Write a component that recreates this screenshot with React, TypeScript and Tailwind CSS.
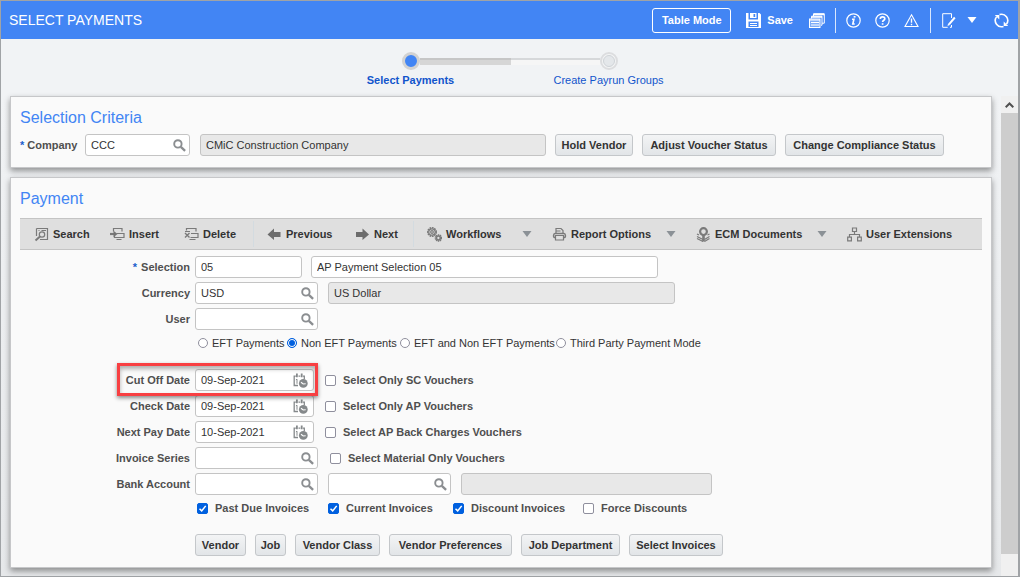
import { useState } from 'react'
import type { ReactNode } from 'react'

function Caret({ className }: { className?: string }) {
  return (
    <svg viewBox="0 0 10 6" className={`h-[6px] w-[10px] shrink-0 ${className ?? ''}`} fill="currentColor" aria-hidden="true">
      <path d="M0.5 0h9L5 6z" />
    </svg>
  )
}

function Magnifier() {
  return (
    <svg viewBox="0 0 13 13" className="h-[13px] w-[13px]" fill="none" stroke="#8b8e91" aria-hidden="true">
      <circle cx="4.9" cy="4.9" r="3.7" strokeWidth="1.9" />
      <path d="M7.8 7.8l4.3 4.1" strokeWidth="2.3" />
    </svg>
  )
}

function CalendarClock() {
  return (
    <svg viewBox="0 0 15 15" className="mr-[2px] h-[15px] w-[15px]" fill="none" stroke="#85898b" aria-hidden="true">
      <path d="M5 12.5H1.2V3.2h1.6M5.5 3.2h1.8M10 3.2h1.3v3" strokeWidth="1.3" />
      <path d="M3.9 0.5v3.7M8.7 0.5v3.7" strokeWidth="1.8" />
      <path d="M2.9 6.8l1.1-.6v4.6" strokeWidth="1" />
      <circle cx="10.3" cy="10.4" r="4.4" fill="#85898b" stroke="none" />
      <path d="M8 9.2l2.2 1.800 2.500-.2" stroke="#fff" strokeWidth="1.100" />
    </svg>
  )
}

const toolIcons: Record<string, ReactNode> = {
  search: (
    <>
      <path d="M2.500 1.500h11v11H6M2.500 1.500v7.500" />
      <path d="M4.500 3.500h1M7.500 3.500h4.500" />
      <circle cx="8" cy="7.500" r="2.700" />
      <path d="M6 9.500l-4.500 4" strokeWidth="2" />
    </>
  ),
  insert: (
    <>
      <path d="M3.500 4.500v-3h8.500v3M6.500 6.500h7.500v4H4.500V9M6.500 12.500h5" />
      <path d="M0 7h5" strokeWidth="2.200" />
      <path d="M3.500 3.800l4 3.200-4 3.200z" fill="#747474" stroke="none" />
    </>
  ),
  delete: (
    <>
      <path d="M2.500 3.500v-2H12v3M7 6.500h7v4H6.500M5.500 12.500h6M1 4.500h5" />
      <path d="M1 6l4.500 4.500M5.500 6L1 10.500" strokeWidth="1.400" />
    </>
  ),
  previous: <path d="M7 1.500L.5 7.500 7 13v-3h6.500V5H7z" fill="#6c6c6c" stroke="none" />,
  next: <path d="M7.500 1.500l6.500 6-6.500 5.500v-3H1V5h6.500z" fill="#6c6c6c" stroke="none" />,
  workflows: (
    <>
      <circle cx="5" cy="5" r="4.200" strokeWidth="1.600" strokeDasharray="1.700 .7" />
      <circle cx="5" cy="5" r="3.200" />
      <circle cx="5" cy="5" r="1.300" />
      <circle cx="11.400" cy="11" r="3" strokeWidth="1.600" strokeDasharray="1.300 .6" />
      <circle cx="11.400" cy="11" r="1.900" strokeWidth="1.500" />
    </>
  ),
  report: (
    <>
      <path d="M4 6V1.500h5l2 2V6M4.500 4h4" />
      <path d="M3.500 10.500h-1c-1.300 0-1.300-4 .5-4h9c1.800 0 1.800 4 .5 4h-1" strokeWidth="1.500" />
      <path d="M3.500 8.500h8v4.500h-8z" fill="#dfdfdf" />
    </>
  ),
  ecm: (
    <>
      <path d="M1 7l2 1M1 9.500l6 3M1 11.500l6 3M13.500 7l-2 1M13.500 9.500l-5 3M13.500 11.500l-5 3" />
      <circle cx="7.500" cy="4.600" r="3.400" strokeWidth="2.200" />
      <path d="M7.500 8v6.500" strokeWidth="2.600" />
    </>
  ),
  extensions: (
    <>
      <path d="M5.500 1h4v3.500h-4zM7.500 4.500v3M2.500 10V7.500h10V10" />
      <path d="M.7 10.200h3.700v3.600H.7zM10.600 10.200h3.700v3.600h-3.700z" />
    </>
  ),
}

const tools = [
  { icon: 'search', label: 'Search', size: 'w-[76px]' },
  { icon: 'insert', label: 'Insert', size: 'w-[74px]' },
  { icon: 'delete', label: 'Delete', size: 'w-[69px]' },
  { icon: 'previous', label: 'Previous', size: 'w-[88px]', divided: true },
  { icon: 'next', label: 'Next', size: 'w-[58px]' },
  { icon: 'workflows', label: 'Workflows', size: 'w-[125px]', divided: true, menu: true },
  { icon: 'report', label: 'Report Options', size: 'w-[144px]', menu: true },
  { icon: 'ecm', label: 'ECM Documents', size: 'w-[151px]', menu: true },
  { icon: 'extensions', label: 'User Extensions', size: 'w-[112px]' },
]

const modes = [
  { label: 'EFT Payments', size: 'w-[89px]' },
  { label: 'Non EFT Payments', size: 'w-[113px]' },
  { label: 'EFT and Non EFT Payments', size: 'w-[156px]' },
  { label: 'Third Party Payment Mode', size: 'w-[146px]' },
]

const invoiceFlags = [
  { label: 'Past Due Invoices', size: 'w-[131px]', checked: true },
  { label: 'Current Invoices', size: 'w-[125px]', checked: true },
  { label: 'Discount Invoices', size: 'w-[130px]', checked: true },
  { label: 'Force Discounts', size: 'w-[110px]', checked: false },
]

const actions = [
  { label: 'Vendor', size: 'w-[51px]' },
  { label: 'Job', size: 'w-[31px]' },
  { label: 'Vendor Class', size: 'w-[85px]' },
  { label: 'Vendor Preferences', size: 'w-[123px]' },
  { label: 'Job Department', size: 'w-[99px]' },
  { label: 'Select Invoices', size: 'w-[94px]' },
]

function ToolButton({ icon, label, size, divided, menu }: (typeof tools)[number]) {
  return (
    <>
      {divided && <span className="mr-[13px] h-[26px] w-px bg-[#d3dbe0]" />}
      <button type="button" className={`flex shrink-0 items-center gap-1 text-left ${size}`}>
        <svg viewBox="0 0 15 15" className="h-[15px] w-[15px] shrink-0" fill="none" stroke="#7a7a7a" strokeWidth="1.200" aria-hidden="true">
          {toolIcons[icon]}
        </svg>
        <span className="whitespace-nowrap">{label}</span>
        {menu && <Caret className="mr-5 ml-auto text-[#8b9196]" />}
      </button>
    </>
  )
}

function GreyButton({ label, size }: { label: string; size: string }) {
  return (
    <button
      type="button"
      className={`h-[22px] rounded-[3px] border border-[#c4c7ca] bg-linear-to-b from-[#f3f4f5] to-[#e2e5e8] text-center font-bold whitespace-nowrap text-[#333] ${size}`}
    >
      {label}
    </button>
  )
}

type FieldProps = { id: string; value?: string; size: string; icon?: ReactNode; readOnly?: boolean; label?: string }

function Field({ id, value = '', size, icon, readOnly, label }: FieldProps) {
  return (
    <div className={`relative shrink-0 ${size}`}>
      <input
        id={id}
        type="text"
        aria-label={label}
        defaultValue={value}
        readOnly={readOnly}
        className={`block h-[22px] w-full rounded-[3px] border border-[#c4c4c4] px-[5px] text-[11px] text-[#333] outline-none ${readOnly ? 'bg-[#e8e8e8]' : 'bg-white'}`}
      />
      {icon && (
        <button type="button" aria-label="Choose a value" className="absolute inset-y-0 right-1 flex items-center">
          {icon}
        </button>
      )}
    </div>
  )
}

function Check({ label, size, checked }: { label: string; size?: string; checked?: boolean }) {
  return (
    <label className={`flex shrink-0 items-center gap-[7px] font-bold whitespace-nowrap text-[#4f4f4f] ${size ?? ''}`}>
      <span className="relative block h-[11px] w-[11px]">
        <input
          type="checkbox"
          defaultChecked={checked}
          className="peer block h-[11px] w-[11px] appearance-none rounded-[2px] border border-[#8f8f9d] bg-white checked:border-[#0060df] checked:bg-[#0060df]"
        />
        <svg viewBox="0 0 11 11" className="pointer-events-none absolute inset-0 hidden peer-checked:block" fill="none" stroke="#fff" strokeWidth="1.500">
          <path d="M2.500 5.700l2.200 2.200 4-5" />
        </svg>
      </span>
      {label}
    </label>
  )
}

type RowProps = { id: string; label: string; required?: boolean; highlighted?: boolean; children: ReactNode }

function Row({ id, label, required, highlighted, children }: RowProps) {
  return (
    <div className="relative flex items-center">
      <label htmlFor={id} className="mr-[5px] w-[170px] shrink-0 text-right font-bold text-[#4f4f4f]">
        {required && <span className="mr-1 text-[#1a5fcc]">*</span>}
        {label}
      </label>
      {children}
      {highlighted && (
        <div className="pointer-events-none absolute -top-[6px] -bottom-[5px] left-[97px] z-10 w-[201px] border-3 border-[#f83f42] shadow-[0_2px_4px_rgba(0,0,0,0.45),inset_0_3px_4px_rgba(0,0,0,0.3)]" />
      )}
    </div>
  )
}

function Panel({ title, children }: { title: string; children: ReactNode }) {
  return (
    <section className="border border-[#c6c7c9] bg-[#fafafa] px-[9px] pt-[9px] pb-[11px] shadow-[0_3px_6px_rgba(0,0,0,0.4)]">
      <h2 className="text-[16px] leading-6 text-[#4285f4]">{title}</h2>
      {children}
    </section>
  )
}

function TopBar() {
  return (
    <header className="flex h-[38px] items-center bg-[#4285f4] pr-[9px] pl-2 text-white">
      <h1 className="mr-auto text-[14px] leading-4">SELECT PAYMENTS</h1>
      <button type="button" className="h-[25px] w-[79px] rounded-[3px] border border-white font-bold">
        Table Mode
      </button>
      <button type="button" className="ml-[15px] flex items-center gap-[6px] font-bold">
        <svg viewBox="0 0 15 15" className="h-[15px] w-[15px]" fill="#fff" aria-hidden="true">
          <path d="M0 0h2.500v6.500H12V0h1.500L15 1.500V15H0z" />
          <path d="M4 0h6.500v5H4z" />
          <path d="M7.500 1h1.700v3H7.500zM2.500 8.500h10V14h-10z" fill="#4285f4" />
          <path d="M4 10h7v1H4zM4 12h7v1H4z" />
        </svg>
        Save
      </button>
      <button type="button" aria-label="Reports" className="ml-4">
        <svg viewBox="0 0 16 15" className="h-[15px] w-4" fill="none" stroke="#fff" aria-hidden="true">
          <path d="M4.500 3V.7h10.800v9.500H13" />
          <path d="M5 1.500h10" strokeWidth="1.600" />
          <path d="M2.500 5.500V3.200h10.500v9H12" />
          <path d="M3 4h10" strokeWidth="1.600" />
          <rect x=".5" y="6" width="10.500" height="8.500" fill="#7eacf8" />
          <path d="M1 7h10M2 9.500h8M2 12h8" />
        </svg>
      </button>
      <span className="mx-[10px] h-[25px] w-px bg-white/80" />
      <button type="button" aria-label="Information">
        <svg viewBox="0 0 15 15" className="h-[15px] w-[15px]" fill="none" stroke="#fff" aria-hidden="true">
          <circle cx="7.500" cy="7.500" r="6.700" strokeWidth="1.200" />
          <path d="M8.600 3v1.600" strokeWidth="1.900" />
          <path d="M6 6.300h1.900L6.800 11h1.900" strokeWidth="1.600" />
        </svg>
      </button>
      <button type="button" aria-label="Help" className="ml-[14px]">
        <svg viewBox="0 0 15 15" className="h-[15px] w-[15px]" fill="none" stroke="#fff" aria-hidden="true">
          <circle cx="7.500" cy="7.500" r="6.700" strokeWidth="1.200" />
          <path d="M5.300 6c0-3 4.500-2.800 4.500-.3 0 1.600-2.200 1.500-2.200 3.300M7.600 10.200v1.600" strokeWidth="1.700" />
        </svg>
      </button>
      <button type="button" aria-label="Warnings" className="ml-[14px]">
        <svg viewBox="0 0 15 15" className="h-[15px] w-[15px]" fill="none" stroke="#fff" aria-hidden="true">
          <path d="M7.500 1.800l6.500 11.700H1z" strokeWidth="1.100" />
          <path d="M7.500 5.500v4.300M7.500 10.800v1.500" strokeWidth="1.400" />
        </svg>
      </button>
      <span className="mx-[11px] h-[25px] w-px bg-white/80" />
      <button type="button" aria-label="Edit" className="flex items-center gap-[11px]">
        <svg viewBox="0 0 14 15" className="h-[15px] w-[14px]" fill="none" stroke="#fff" aria-hidden="true">
          <path d="M9.500 5V.7H.7v13.600h5M9.500 12v2.300H8" />
          <path d="M12.800 4.500L7 11.300" strokeWidth="2" />
          <path d="M5.500 13l.6-2.500 1.700 1.500z" fill="#fff" stroke="none" />
        </svg>
        <Caret className="text-white" />
      </button>
      <button type="button" aria-label="Refresh" className="ml-[17px]">
        <svg viewBox="0 0 15 15" className="h-[15px] w-[15px]" fill="none" stroke="#fff" strokeWidth="1.600" aria-hidden="true">
          <path d="M5.500 1.600a6.200 6.200 0 0 1 7 9.500M9.500 13.400A6.200 6.200 0 0 1 2.500 3.900" />
          <path d="M.8 2h4.500v4.500zM14.200 13H9.700V8.500z" fill="#fff" stroke="none" />
        </svg>
      </button>
    </header>
  )
}

function Steps() {
  return (
    <nav aria-label="Progress" className="flex h-[57px] flex-col items-center pt-[13px] text-[#1155cc]">
      <div className="flex items-center">
        <span className="h-[18px] w-[18px] rounded-full border-3 border-[#d2d2d2] bg-[#4285f4]" />
        <span className="h-[7px] w-[91px] border-t-2 border-[#c6c6c6] bg-[#d6d6d6]" />
        <span className="h-[7px] w-[89px] border-t-2 border-[#d6d8da] bg-[#f6f6f6]" />
        <span className="flex h-[18px] w-[18px] items-center justify-center rounded-full border-2 border-[#dcdddf] bg-[#f3f4f5]">
          <span className="h-3 w-3 rounded-full border border-[#cfd3d7] bg-[#e4e7ea]" />
        </span>
      </div>
      <div className="mt-[2px] grid w-[396px] grid-cols-2 text-center leading-4">
        <a href="#select" className="font-bold">Select Payments</a>
        <a href="#groups">Create Payrun Groups</a>
      </div>
    </nav>
  )
}

export default function App() {
  const [mode, setMode] = useState('Non EFT Payments')

  return (
    <div className="flex min-h-screen flex-col border border-r-2 border-[#a0a3a6] bg-[#f1f3f5] font-['Liberation_Sans',Arial,sans-serif] text-[11px] leading-[14px] text-[#333]">
      <TopBar />
      <Steps />
      <div className="flex flex-1">
        <main className="flex min-w-0 flex-1 flex-col gap-[9px] bg-linear-to-b from-[#f1f3f5] to-[#e6e8ea] px-[9px] pb-2">
          <Panel title="Selection Criteria">
            <div className="mt-1 flex items-center">
              <label htmlFor="company" className="w-[65px] shrink-0 font-bold text-[#4f4f4f]">
                <span className="mr-[3px] text-[#1a5fcc]">*</span>
                Company
              </label>
              <Field id="company" value="CCC" size="w-[105px]" icon={<Magnifier />} />
              <div className="ml-[10px] flex items-center gap-[9px]">
                <Field id="company-name" label="Company name" value="CMiC Construction Company" size="w-[346px]" readOnly />
                <GreyButton label="Hold Vendor" size="w-[78px]" />
                <GreyButton label="Adjust Voucher Status" size="w-[134px]" />
                <GreyButton label="Change Compliance Status" size="w-[159px]" />
              </div>
            </div>
          </Panel>

          <Panel title="Payment">
            <div className="mt-[7px] flex h-8 items-center border-y border-[#c4c4c4] bg-[#dfdfdf] pl-[14px] font-bold text-[#333]">
              {tools.map((tool) => (
                <ToolButton key={tool.label} {...tool} />
              ))}
            </div>

            <div className="mt-[6px] flex flex-col gap-1">
              <Row id="selection" label="Selection" required>
                <Field id="selection" value="05" size="mr-[9px] w-[107px]" />
                <Field id="selection-name" label="Selection name" value="AP Payment Selection 05" size="w-[347px]" />
              </Row>
              <Row id="currency" label="Currency">
                <Field id="currency" value="USD" size="mr-[10px] w-[123px]" icon={<Magnifier />} />
                <Field id="currency-name" label="Currency name" value="US Dollar" size="w-[347px]" readOnly />
              </Row>
              <Row id="user" label="User">
                <Field id="user" size="w-[123px]" icon={<Magnifier />} />
              </Row>
            </div>

            <div className="mt-[6px] ml-[178px] flex">
              {modes.map(({ label, size }) => (
                <label key={label} className={`flex shrink-0 items-center gap-1 whitespace-nowrap ${size}`}>
                  <input
                    type="radio"
                    name="mode"
                    checked={mode === label}
                    onChange={() => setMode(label)}
                    className="h-[10px] w-[10px] shrink-0 appearance-none rounded-full border border-[#8f8f9d] bg-white checked:border-[#0060df] checked:bg-[#0060df] checked:shadow-[inset_0_0_0_1px_#fff]"
                  />
                  {label}
                </label>
              ))}
            </div>

            <div className="mt-[19px] flex flex-col gap-1">
              <Row id="cutoff" label="Cut Off Date" highlighted>
                <Field id="cutoff" value="09-Sep-2021" size="mr-[11px] w-[119px]" icon={<CalendarClock />} />
                <Check label="Select Only SC Vouchers" />
              </Row>
              <Row id="check-date" label="Check Date">
                <Field id="check-date" value="09-Sep-2021" size="mr-[11px] w-[119px]" icon={<CalendarClock />} />
                <Check label="Select Only AP Vouchers" />
              </Row>
              <Row id="next-pay" label="Next Pay Date">
                <Field id="next-pay" value="10-Sep-2021" size="mr-[11px] w-[119px]" icon={<CalendarClock />} />
                <Check label="Select AP Back Charges Vouchers" />
              </Row>
              <Row id="series" label="Invoice Series">
                <Field id="series" size="mr-3 w-[123px]" icon={<Magnifier />} />
                <Check label="Select Material Only Vouchers" />
              </Row>
              <Row id="bank" label="Bank Account">
                <Field id="bank" size="mr-[10px] w-[123px]" icon={<Magnifier />} />
                <Field id="account" label="Account" size="mr-[10px] w-[123px]" icon={<Magnifier />} />
                <Field id="account-name" label="Account name" size="w-[251px]" readOnly />
              </Row>
            </div>

            <div className="mt-[6px] ml-[177px] flex">
              {invoiceFlags.map((flag) => (
                <Check key={flag.label} {...flag} />
              ))}
            </div>

            <div className="mt-[19px] ml-[175px] flex gap-[9px]">
              {actions.map((action) => (
                <GreyButton key={action.label} {...action} />
              ))}
            </div>
          </Panel>
        </main>

        <div className="flex w-[17px] shrink-0 flex-col bg-[#f0f0f0] pb-[22px]" aria-hidden="true">
          <div className="flex h-[17px] items-center justify-center">
            <svg viewBox="0 0 9 6" className="h-[6px] w-[9px]" fill="none" stroke="#505050" strokeWidth="2">
              <path d="M.7 5.200l3.800-3.700 3.800 3.700" />
            </svg>
          </div>
          <div className="flex-1 bg-[#cdcdcd]" />
        </div>
      </div>
    </div>
  )
}
